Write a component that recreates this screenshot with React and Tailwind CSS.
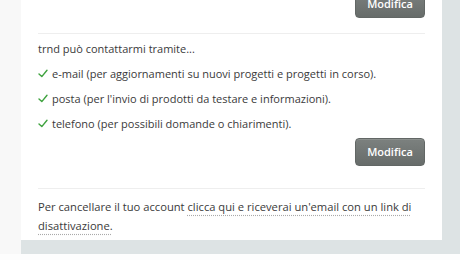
import React from 'react';

// Check mark used in the contact preferences list
const Check = () => (
  <svg width="10" height="9" viewBox="0 0 10 9" className="shrink-0">
    <path d="M1 5 L3.8 7.6 L9 1.2" fill="none" stroke="#3fa33f" strokeWidth="1.4" strokeLinecap="round" strokeLinejoin="round" />
  </svg>
);

const EditButton = () => (
  <button className="w-[70px] h-[28px] rounded-[4px] bg-gradient-to-b from-[#7c817f] to-[#676c6a] text-white text-[11px] font-semibold border border-[#626765] shadow-[inset_0_1px_0_rgba(255,255,255,0.12)]">
    Modifica
  </button>
);

const items = [
  'e-mail (per aggiornamenti su nuovi progetti e progetti in corso).',
  "posta (per l'invio di prodotti da testare e informazioni).",
  'telefono (per possibili domande o chiarimenti).',
];

export default function App() {
  return (
    <div className="w-[460px] h-[260px] overflow-hidden bg-[#fdfdfd] font-['Open_Sans',sans-serif] text-[#3a3a3a]">
      <div className="bg-[#f8f8f8] pl-[21px]">
        <div className="bg-[#dde3e4] pr-[18px] pb-[14px]">
          <div className="bg-white px-[17px] pb-[5px] -mt-[10px]">
            {/* previous section tail */}
            <div className="flex justify-end pb-[15px]">
              <EditButton />
            </div>
            <div className="border-t border-[#eeeeee]" />

            <div className="pt-[2px] text-[11px] leading-[25px]">
              <div>trnd può contattarmi tramite...</div>
              {items.map((t) => (
                <div key={t} className="flex items-center gap-[4px]">
                  <Check />
                  <span>{t}</span>
                </div>
              ))}
            </div>

            <div className="flex justify-end pt-[2px] pb-[22px]">
              <EditButton />
            </div>
            <div className="border-t border-[#eeeeee]" />

            <p className="pt-[8px] text-[11.2px] leading-[19px] pr-[6px]">
              Per cancellare il tuo account{' '}
              <a className="underline decoration-dotted decoration-[#aaaaaa] underline-offset-[4px]">
                clicca qui e riceverai un'email con un link di disattivazione.
              </a>
            </p>
          </div>
        </div>
      </div>
    </div>
  );
}
